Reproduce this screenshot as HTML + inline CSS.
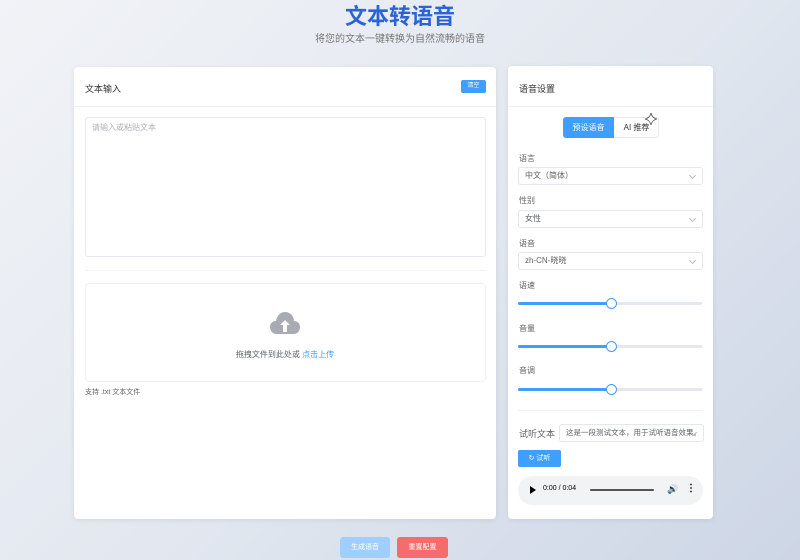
<!DOCTYPE html>
<html><head><meta charset="utf-8"><style>
*{margin:0;padding:0;box-sizing:border-box}
body{width:800px;height:560px;overflow:hidden;background:linear-gradient(135deg,#f1f3f7 0%,#e3e8f0 50%,#cdd6e6 100%);font-family:"Liberation Sans","Noto Sans CJK SC",sans-serif;position:relative;color:#303133}
.a{position:absolute}
h1{position:absolute;left:0;width:800px;top:-1px;text-align:center;font-size:22px;color:#2a64d6;font-weight:bold}
.sub{left:0;width:800px;top:30px;text-align:center;font-size:10px;color:#777}
.card{background:#fff;border-radius:4px;box-shadow:0 1px 6px rgba(0,0,0,.08)}
.t{font-size:9px;color:#303133}
.lbl{font-size:8px;color:#606266}
.sel{border:1px solid #e4e7ed;border-radius:3px;height:18px;font-size:8px;color:#606266;padding:0 6px;line-height:16px}
.sel:after{content:"";position:absolute;right:7px;top:5px;width:4px;height:4px;border-right:1px solid #bbb;border-bottom:1px solid #bbb;transform:rotate(45deg)}
.track{height:3px;background:#e4e7ed;border-radius:2px}
.fill{height:3px;background:#409eff;border-radius:2px;width:93px}
.thumb{width:11px;height:11px;border:1.5px solid #409eff;background:#fff;border-radius:50%;top:-4px;left:88px}
</style></head><body>
<h1>文本转语音</h1>
<div class="a sub">将您的文本一键转换为自然流畅的语音</div>

<div class="a card" style="left:74px;top:67px;width:422px;height:452px">
 <div class="a t" style="left:11px;top:15px">文本输入</div>
 <div class="a" style="left:387px;top:13px;width:25px;height:13px;background:#409eff;border-radius:2px;color:#fff;font-size:6px;text-align:center;line-height:13px">清空</div>
 <div class="a" style="left:0;top:39px;width:422px;height:1px;background:#f0f0f2"></div>
 <div class="a" style="left:11px;top:50px;width:401px;height:140px;border:1px solid #e4e7ed;border-radius:3px;font-size:8px;color:#b0b3b8;padding:4px 6px">请输入或粘贴文本</div>
 <div class="a" style="left:11px;top:203px;width:401px;height:1px;background:#f3f3f5"></div>
 <div class="a" style="left:11px;top:216px;width:401px;height:99px;border:1px solid #eef0f3;border-radius:4px"></div>
 <svg class="a" style="left:195px;top:243px" width="32" height="26" viewBox="0 0 32 26"><path d="M8 24C3 24 1 20 1 17c0-4 3-6 6-6 1-6 5-9 9-9 5 0 9 4 9 9 4 0 6 3 6 6 0 4-3 7-6 7z" fill="#a8abb2"/><path d="M16 10l-5 5h3v7h4v-7h3z" fill="#fff"/></svg>
 <div class="a" style="left:0;width:422px;top:282px;text-align:center;font-size:8px;color:#606266">拖拽文件到此处或 <span style="color:#409eff">点击上传</span></div>
 <div class="a" style="left:11px;top:320px;font-size:7px;color:#606266">支持 .txt 文本文件</div>
</div>

<div class="a card" style="left:508px;top:66px;width:205px;height:453px">
 <div class="a t" style="left:11px;top:16px">语音设置</div>
 <div class="a" style="left:0;top:40px;width:205px;height:1px;background:#f0f0f2"></div>
 <div class="a" style="left:55px;top:51px;width:96px;height:21px;border:1px solid #e4e7ed;border-radius:3px"></div>
 <div class="a" style="left:55px;top:51px;width:51px;height:21px;background:#409eff;border-radius:3px 0 0 3px;color:#fff;font-size:8px;text-align:center;line-height:21px">预设语音</div>
 <div class="a" style="left:106px;top:51px;width:45px;height:21px;font-size:8px;text-align:center;line-height:21px">AI 推荐</div>
 <svg class="a" style="left:136px;top:46px" width="14" height="14" viewBox="0 0 14 14"><path d="M7 1Q8 6 13 7Q8 8 7 13Q6 8 1 7Q6 6 7 1z" fill="#fff" stroke="#555" stroke-width=".8"/></svg>
 <div class="a lbl" style="left:11px;top:87px">语言</div>
 <div class="a sel" style="left:10px;top:101px;width:185px">中文（简体）</div>
 <div class="a lbl" style="left:11px;top:129px">性别</div>
 <div class="a sel" style="left:10px;top:144px;width:185px">女性</div>
 <div class="a lbl" style="left:11px;top:172px">语音</div>
 <div class="a sel" style="left:10px;top:186px;width:185px">zh-CN-晓晓</div>
 <div class="a lbl" style="left:11px;top:214px">语速</div>
 <div class="a track" style="left:10px;top:236px;width:184px"><div class="fill"></div><div class="a thumb"></div></div>
 <div class="a lbl" style="left:11px;top:257px">音量</div>
 <div class="a track" style="left:10px;top:279px;width:184px"><div class="fill"></div><div class="a thumb"></div></div>
 <div class="a lbl" style="left:11px;top:299px">音调</div>
 <div class="a track" style="left:10px;top:322px;width:184px"><div class="fill"></div><div class="a thumb"></div></div>
 <div class="a" style="left:10px;top:344px;width:185px;height:1px;background:#f3f3f5"></div>
 <div class="a" style="left:11px;top:361px;font-size:9px;color:#606266">试听文本</div>
 <div class="a sel" style="left:51px;top:358px;width:145px;font-size:7.5px;white-space:nowrap;overflow:hidden">这是一段测试文本，用于试听语音效果。</div>
 <div class="a" style="left:10px;top:384px;width:43px;height:17px;background:#409eff;border-radius:2px;color:#fff;font-size:7px;text-align:center;line-height:17px">↻ 试听</div>
 <div class="a" style="left:10px;top:410px;width:185px;height:29px;background:#f1f3f4;border-radius:15px"></div>
 <div class="a" style="left:22px;top:420px;width:0;height:0;border-left:6px solid #000;border-top:4px solid transparent;border-bottom:4px solid transparent"></div>
 <div class="a" style="left:35px;top:419px;font-size:7px;color:#000">0:00 / 0:04</div>
 <div class="a" style="left:82px;top:423px;width:64px;height:2px;background:#555;border-radius:1px"></div>
 <div class="a" style="left:159px;top:418px;font-size:9px;color:#000">🔊</div>
 <div class="a" style="left:178px;top:417px;font-size:10px;font-weight:bold;color:#000">⋮</div>
</div>

<div class="a" style="left:340px;top:537px;width:50px;height:21px;background:#a0cfff;border-radius:3px;color:#fff;font-size:7px;text-align:center;line-height:21px">生成语音</div>
<div class="a" style="left:397px;top:537px;width:51px;height:21px;background:#f56c6c;border-radius:3px;color:#fff;font-size:7px;text-align:center;line-height:21px">重置配置</div>
</body></html>
